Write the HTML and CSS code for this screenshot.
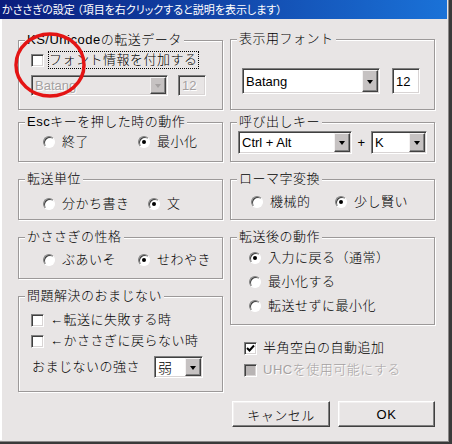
FILE: index.html
```html
<!DOCTYPE html>
<html lang="ja">
<head>
<meta charset="utf-8">
<title>かささぎの設定</title>
<link rel="stylesheet" href="styles.css">
</head>
<body>
<div class="window">
  <div class="frame">
    <div class="titlebar">かささぎの設定 （項目を右クリックすると説明を表示します）</div>
    <div class="content">
      <div class="col">
        <div class="group g-ks">
          <div class="legend">KS/Unicodeの転送データ</div>
          <div class="row ks-chk"><span class="checkbox"></span><span class="focus">フォント情報を付加する</span></div>
          <div class="ctl-row ks-ctl">
            <div class="combo disabled c-ks"><span class="val">Batang</span><span class="drop"><i></i></span></div>
            <div class="edit disabled e-ks">12</div>
          </div>
        </div>

        <div class="group g-esc">
          <div class="legend">Escキーを押した時の動作</div>
          <div class="row radios">
            <span class="opt w95"><span class="radio"></span>終了</span>
            <span class="opt"><span class="radio on"></span>最小化</span>
          </div>
        </div>

        <div class="group g-unit">
          <div class="legend">転送単位</div>
          <div class="row radios">
            <span class="opt w105"><span class="radio"></span>分かち書き</span>
            <span class="opt"><span class="radio on"></span>文</span>
          </div>
        </div>

        <div class="group g-char">
          <div class="legend">かささぎの性格</div>
          <div class="row radios">
            <span class="opt w95"><span class="radio"></span>ぶあいそ</span>
            <span class="opt"><span class="radio on"></span>せわやき</span>
          </div>
        </div>

        <div class="group g-magic">
          <div class="legend">問題解決のおまじない</div>
          <div class="row chk m1"><span class="checkbox"></span>←転送に失敗する時</div>
          <div class="row chk m2"><span class="checkbox"></span>←かささぎに戻らない時</div>
          <div class="ctl-row m3">
            <span class="strength">おまじないの強さ</span>
            <div class="combo c-weak"><span class="val">弱</span><span class="drop"><i></i></span></div>
          </div>
        </div>
      </div>

      <div class="col">
        <div class="group g-font">
          <div class="legend">表示用フォント</div>
          <div class="ctl-row font-ctl">
            <div class="combo c-font"><span class="val">Batang</span><span class="drop"><i></i></span></div>
            <div class="edit e-font">12</div>
          </div>
        </div>

        <div class="group g-key">
          <div class="legend">呼び出しキー</div>
          <div class="ctl-row key-ctl">
            <div class="combo c-mod"><span class="val">Ctrl + Alt</span><span class="drop"><i></i></span></div>
            <span class="plus">+</span>
            <div class="combo c-k"><span class="val">K</span><span class="drop"><i></i></span></div>
          </div>
        </div>

        <div class="group g-roma">
          <div class="legend">ローマ字変換</div>
          <div class="row radios">
            <span class="opt w84"><span class="radio"></span>機械的</span>
            <span class="opt"><span class="radio on"></span>少し賢い</span>
          </div>
        </div>

        <div class="group g-after">
          <div class="legend">転送後の動作</div>
          <div class="vradios">
            <span class="opt"><span class="radio on"></span>入力に戻る（通常）</span>
            <span class="opt"><span class="radio"></span>最小化する</span>
            <span class="opt"><span class="radio"></span>転送せずに最小化</span>
          </div>
        </div>

        <div class="row chk r1"><span class="checkbox checked"><svg width="9" height="9" viewBox="0 0 9 9"><polyline points="1,4 3.5,6.5 8,1.5" fill="none" stroke="#000" stroke-width="2"/></svg></span>半角空白の自動追加</div>
        <div class="row chk r2 dis"><span class="checkbox disabled"></span>UHCを使用可能にする</div>

        <div class="buttons">
          <button class="btn b-cancel" type="button">キャンセル</button>
          <button class="btn b-ok" type="button">OK</button>
        </div>
      </div>
    </div>
  </div>
  <svg class="mark" width="452" height="444" viewBox="0 0 452 444">
    <ellipse cx="50" cy="65" rx="34" ry="31" fill="none" stroke="#e41414" stroke-width="3.5"/>
  </svg>
</div>
</body>
</html>
```

FILE: styles.css
```css
* { box-sizing: border-box; margin: 0; padding: 0; }

html, body {
  width: 452px;
  height: 444px;
  overflow: hidden;
  background: #e8e5e5;
}

body {
  font-family: "Liberation Sans", "Noto Sans CJK JP", sans-serif;
  font-size: 13px;
  font-weight: 300;
  letter-spacing: 0.5px;
  color: #000;
}

.window {
  position: relative;
  width: 452px;
  height: 444px;
  background: #e8e5e5;
  border-right: 3px solid #3a3a3a;
  border-bottom: 2px solid #3a3a3a;
}

.frame {
  height: 100%;
  display: flex;
  flex-direction: column;
  border-right: 1px solid #8a8888;
  border-bottom: 1px solid #8a8888;
  padding-right: 1px;
  padding-bottom: 1px;
}

.titlebar {
  height: 19px;
  flex: none;
  background: linear-gradient(to right, #0a1c7c, #1a72d8);
  color: #fff;
  font-family: "Noto Sans CJK JP", sans-serif;
  font-size: 11px;
  font-weight: 400;
  letter-spacing: 0;
  line-height: 19px;
  padding-left: 2px;
  font-feature-settings: "palt";
  white-space: nowrap;
  overflow: hidden;
}

.content {
  flex: 1;
  display: flex;
  gap: 7px;
  padding-left: 17px;
  border-left: 1px solid #fff;
  box-shadow: inset 1px 0 0 #fff;
}

.col {
  width: 205px;
  display: flex;
  flex-direction: column;
}

/* group boxes */
.group {
  border: 1px solid #9c9999;
  box-shadow: inset 1px 1px 0 #fff, 1px 1px 0 #fff;
}

.legend {
  margin: -8px 0 0 6px;
  padding: 0 2px;
  width: fit-content;
  height: 14px;
  line-height: 14px;
  background: #e8e5e5;
  white-space: nowrap;
}

.g-ks { margin-top: 21px; height: 70px; }
.g-esc { margin-top: 12px; height: 40px; }
.g-unit { margin-top: 17px; height: 41px; }
.g-char { margin-top: 17px; height: 42px; }
.g-magic { margin-top: 17px; height: 96px; }

.g-font { margin-top: 20px; height: 71px; }
.g-key { margin-top: 12px; height: 40px; }
.g-roma { margin-top: 17px; height: 41px; }
.g-after { margin-top: 17px; height: 88px; }

/* rows */
.row {
  display: flex;
  align-items: center;
  height: 16px;
  line-height: 16px;
  white-space: nowrap;
}

.ctl-row {
  display: flex;
  align-items: center;
}

.ks-chk { margin: 4px 0 0 12px; height: 18px; }
.focus {
  margin-left: 4px;
  padding: 0 1px;
  height: 18px;
  line-height: 18px;
  outline: 1px dotted #000;
  outline-offset: -1px;
}
.ks-ctl { margin: 6px 0 0 12px; }

.g-esc .radios { margin: 5px 0 0 24px; }
.g-unit .radios { margin: 10px 0 0 24px; }
.g-char .radios { margin: 8px 0 0 24px; }
.g-roma .radios { margin: 8px 0 0 20px; }

.opt {
  display: flex;
  align-items: center;
  gap: 7px;
  height: 16px;
  line-height: 16px;
  white-space: nowrap;
}
.w95 { width: 95px; }
.w105 { width: 105px; }
.w84 { width: 84px; }

.vradios {
  margin: 6px 0 0 18px;
  display: flex;
  flex-direction: column;
  gap: 8px;
}

.chk .checkbox { margin-right: 6px; }
.m1 { margin: 9px 0 0 12px; }
.m2 { margin: 5px 0 0 12px; }
.m3 { margin: 7px 0 0 13px; }
.strength { width: 122px; white-space: nowrap; line-height: 22px; }

.font-ctl { margin: 22px 0 0 11px; }
.key-ctl { margin: 2px 0 0 7px; }
.plus { width: 19px; text-align: center; line-height: 23px; }

.r1 { margin: 15px 0 0 14px; }
.r2 { margin: 6px 0 0 14px; }
.dis { color: #a5a1a1; text-shadow: 1px 1px 0 #fff; }

/* radio */
.radio {
  position: relative;
  width: 12px;
  height: 12px;
  flex: none;
  border-radius: 50%;
  background: #fff;
  border: 1px solid;
  border-color: #808080 #fff #fff #808080;
  box-shadow: inset 1px 1px 0 #404040;
}
.radio.on::after {
  content: "";
  position: absolute;
  left: 3px;
  top: 3px;
  width: 4px;
  height: 4px;
  border-radius: 50%;
  background: #000;
}

/* checkbox */
.checkbox {
  width: 13px;
  height: 13px;
  flex: none;
  background: #fff;
  border: 1px solid;
  border-color: #808080 #fff #fff #808080;
  box-shadow: inset 1px 1px 0 #404040, inset -1px -1px 0 #d8d4d4;
  display: flex;
  align-items: center;
  justify-content: center;
}
.checkbox.disabled { background: #b8b4b4; }

/* combo & edit */
.combo, .edit {
  display: flex;
  background: #fff;
  border: 1px solid;
  border-color: #808080 #fff #fff #808080;
  box-shadow: inset 1px 1px 0 #404040, inset -1px -1px 0 #d8d4d4;
  padding: 1px;
  font-family: "Liberation Sans", "Noto Sans CJK JP", sans-serif;
  font-size: 13px;
  font-weight: 400;
  letter-spacing: 0;
  white-space: nowrap;
}
.val {
  flex: 1;
  padding-left: 2px;
  display: flex;
  align-items: center;
}
.drop {
  width: 16px;
  flex: none;
  background: #c6c2c2;
  border: 1px solid;
  border-color: #f4f2f2 #404040 #404040 #f4f2f2;
  box-shadow: inset -1px -1px 0 #808080;
  display: flex;
  align-items: center;
  justify-content: center;
}
.drop i {
  width: 0;
  height: 0;
  border-left: 3.5px solid transparent;
  border-right: 3.5px solid transparent;
  border-top: 4px solid #000;
  margin-top: 1px;
}
.edit {
  align-items: center;
  padding-left: 3px;
}
.combo.disabled, .edit.disabled {
  background: #e8e5e5;
  color: #a5a1a1;
  text-shadow: 1px 1px 0 #fff;
}
.combo.disabled .drop i { border-top-color: #a5a1a1; }

.c-ks { width: 137px; height: 21px; }
.e-ks { width: 28px; height: 21px; margin-left: 10px; }
.c-font { width: 138px; height: 26px; }
.e-font { width: 28px; height: 26px; margin-left: 12px; }
.c-mod { width: 114px; height: 23px; }
.c-k { width: 56px; height: 23px; }
.c-weak { width: 49px; height: 22px; font-family: "Noto Sans CJK JP", sans-serif; font-size: 14px; font-weight: 300; }

/* buttons */
.buttons {
  display: flex;
  gap: 8px;
  margin: 23px 0 0 2px;
}
.btn {
  height: 26px;
  background: #e8e5e5;
  font-family: "Liberation Sans", "Noto Sans CJK JP", sans-serif;
  font-size: 13px;
  font-weight: 300;
  letter-spacing: 0.5px;
  color: #000;
  border: 1px solid;
  border-color: #fff #404040 #404040 #fff;
  box-shadow: inset -1px -1px 0 #808080, inset 1px 1px 0 #f2f0f0;
}
.b-cancel { width: 98px; }
.b-ok { width: 97px; }

/* annotation */
.mark {
  position: absolute;
  left: 0;
  top: 0;
  pointer-events: none;
}
```
